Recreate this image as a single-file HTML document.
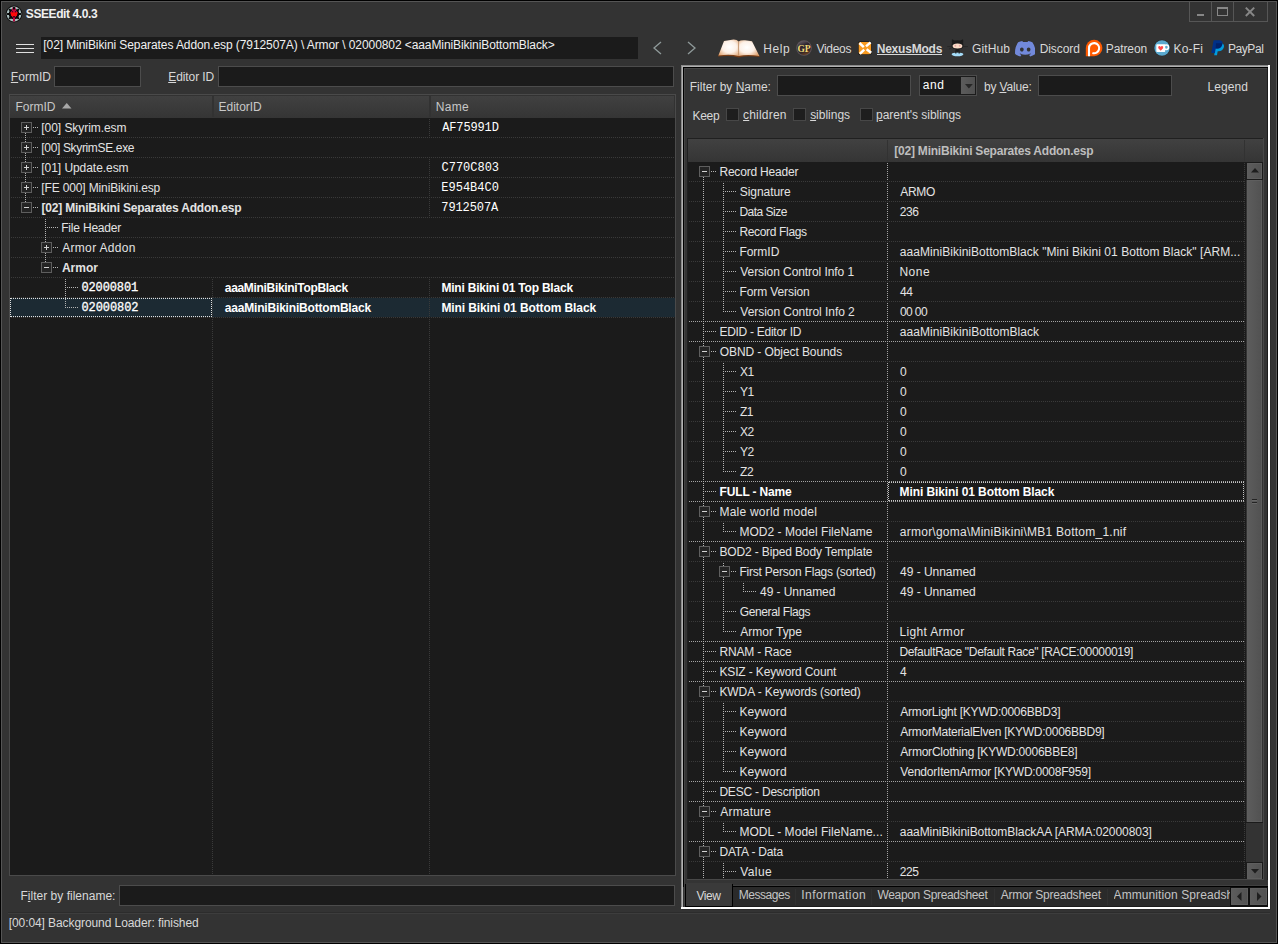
<!DOCTYPE html>
<html><head><meta charset="utf-8"><title>SSEEdit 4.0.3</title><style>
html,body{margin:0;padding:0;background:#333;}
body{width:1278px;height:944px;position:relative;overflow:hidden;font-family:"Liberation Sans",sans-serif;}
#w{position:absolute;left:0;top:0;width:1278px;height:944px;overflow:hidden}
#w div,#w svg,#w span.t{position:absolute}
.t{white-space:pre;line-height:20px;height:20px}
.m{font-family:"Liberation Mono",monospace}
.hd{height:1px;background-image:linear-gradient(90deg,var(--c) 50%,transparent 50%);background-size:2px 1px}
.vd{width:1px;background-image:linear-gradient(180deg,var(--c) 50%,transparent 50%);background-size:1px 2px}
.bx{width:11px;height:11px;box-sizing:border-box;border:1px solid #5e5e5e;background:#242424}
.bx i{position:absolute;background:#d2d2d2;display:block}
.focus{box-sizing:border-box;border:1px dotted #e0e0e0}
u{text-decoration:underline;text-underline-offset:1px}
</style></head><body><div id="w">
<div style="left:0px;top:0px;width:1278px;height:944px;background:#000;"></div>
<div style="left:1px;top:1px;width:1276px;height:942px;background:#555555;"></div>
<div style="left:2px;top:2px;width:1274px;height:940px;background:#333333;"></div>
<div style="left:1189px;top:1px;width:79px;height:21px;border:1px solid #565656;box-sizing:border-box"></div>
<div style="left:1211px;top:2px;width:1px;height:19px;background:#565656;"></div>
<div style="left:1233px;top:2px;width:1px;height:19px;background:#565656;"></div>
<div style="left:1197px;top:14px;width:7px;height:2px;background:#878787;"></div>
<div style="left:1217px;top:7px;width:11px;height:9px;border:1px solid #878787;border-top-width:2px;box-sizing:border-box"></div>
<svg style="left:1244px;top:6px" width="12" height="12" viewBox="0 0 12 12"><path d="M1.8 1.6 L10.2 10 M10.2 1.6 L1.8 10" stroke="#878787" stroke-width="2" fill="none"/></svg>
<div style="left:16px;top:44px;width:18px;height:1px;background:#e0e0e0;"></div>
<div style="left:16px;top:48px;width:18px;height:1px;background:#e0e0e0;"></div>
<div style="left:16px;top:52px;width:18px;height:1px;background:#e0e0e0;"></div>
<div style="left:41px;top:37px;width:597px;height:22px;background:#1b1b1b;"></div>
<svg style="left:652px;top:41px" width="11" height="14" viewBox="0 0 11 14"><path d="M9 1 L2 7 L9 13" stroke="#8f9a9a" stroke-width="1.3" fill="none"/></svg>
<svg style="left:686px;top:41px" width="11" height="14" viewBox="0 0 11 14"><path d="M2 1 L9 7 L2 13" stroke="#8f9a9a" stroke-width="1.3" fill="none"/></svg>
<div style="left:877px;top:54px;width:65px;height:1px;background:#d8d8d8;"></div>
<svg style="left:716px;top:38px" width="46" height="20" viewBox="716 38 46 20">
<defs>
<radialGradient id="pgL" cx="0.55" cy="0.45" r="0.7"><stop offset="0" stop-color="#ffffff"/><stop offset="0.5" stop-color="#fdf1e8"/><stop offset="1" stop-color="#dfa06c"/></radialGradient>
<radialGradient id="pgR" cx="0.4" cy="0.45" r="0.7"><stop offset="0" stop-color="#ffffff"/><stop offset="0.5" stop-color="#fdf1e8"/><stop offset="1" stop-color="#dfa06c"/></radialGradient>
</defs>
<path d="M718 56.6 Q730 55 738.6 57.4 Q748 55.2 759.8 57 L758.8 55 L718.8 54.6 Z" fill="#7a3e16"/>
<path d="M724 41 Q729 40.2 733.5 39.5 Q737 39.4 738.6 41.6 L738.6 56 Q730 53.6 718.4 55.6 Z" fill="url(#pgL)"/>
<path d="M738.6 41.6 Q740.5 40 745 40.3 L752 41.2 L759.4 56.1 Q748 53.8 738.6 56 Z" fill="url(#pgR)"/>
<path d="M738.6 41.8 L738.6 56" stroke="#c9956a" stroke-width="0.8" fill="none"/>
</svg>
<svg style="left:796px;top:40px" width="16" height="16" viewBox="0 0 16 16">
<defs><linearGradient id="gpg" x1="0.2" y1="0" x2="0.6" y2="1"><stop offset="0" stop-color="#6a6068"/><stop offset="0.35" stop-color="#2e2630"/><stop offset="0.75" stop-color="#30242a"/><stop offset="1" stop-color="#6a4020"/></linearGradient></defs>
<circle cx="8" cy="8" r="7.8" fill="#5e565c"/><circle cx="8" cy="8" r="6.9" fill="url(#gpg)"/>
<text x="8" y="11.9" text-anchor="middle" font-family="Liberation Serif" font-weight="bold" font-size="10" fill="#efd977" textLength="13.2" lengthAdjust="spacingAndGlyphs">GP</text>
</svg>
<svg style="left:857px;top:40px" width="16" height="16" viewBox="857 40 16 16">
<rect x="858" y="41.2" width="13.8" height="13.8" rx="2.2" fill="#1c1c1c"/>
<rect x="858.7" y="41.9" width="12.4" height="12.4" rx="1.8" fill="#f89a20"/>
<path d="M859.4 43 L863.8 47.2 M870.6 42.4 L866 46.4 M859.8 53.8 L864.2 49.6 M871.2 52.8 L866.6 49.2" stroke="#ffffff" stroke-width="2.5" fill="none"/>
</svg>
<svg style="left:945px;top:38px" width="24" height="20" viewBox="945 38 24 20">
<ellipse cx="957.5" cy="54.3" rx="5.9" ry="1.9" fill="#a4dcf8"/>
<path d="M947.2 46.6 L951.8 46.5 M963.2 46.5 L968 46.6 M949 49 L952 47.8" stroke="#232323" stroke-width="0.7" fill="none"/>
<path d="M952 39.2 L954.6 40.6 Q957.5 40 960.4 40.6 L963 39.2 Q963.6 41.5 963.1 43 Q964 45.5 963 47.4 Q961.5 49 959.5 49 L959.8 53.4 L958.6 53.6 L958.3 50.6 L957.5 53 L956.7 50.6 L956.4 53.6 L955.2 53.4 L955.5 49 Q953.5 49 952 47.4 Q951 45.5 951.9 43 Q951.4 41.5 952 39.2 Z" fill="#1b1b1b"/>
<ellipse cx="957.5" cy="45.9" rx="4.9" ry="2.5" fill="#fbdcc6"/>
<ellipse cx="955.4" cy="45.7" rx="0.9" ry="1" fill="#e8a8a8"/><ellipse cx="959.7" cy="45.7" rx="0.9" ry="1" fill="#e8a8a8"/>
</svg>
<svg style="left:1014.7px;top:41.2px" width="20.5" height="15.5" viewBox="0 0 127.14 96.36">
<path fill="#7289da" d="M107.7,8.07A105.15,105.15,0,0,0,81.47,0a72.06,72.06,0,0,0-3.36,6.83A97.68,97.68,0,0,0,49,6.83,72.37,72.37,0,0,0,45.64,0,105.89,105.89,0,0,0,19.39,8.09C2.79,32.65-1.71,56.6.54,80.21h0A105.73,105.73,0,0,0,32.71,96.36,77.7,77.7,0,0,0,39.6,85.25a68.42,68.42,0,0,1-10.85-5.18c.91-.66,1.8-1.34,2.66-2a75.57,75.57,0,0,0,64.32,0c.87.71,1.76,1.39,2.66,2a68.68,68.68,0,0,1-10.87,5.19,77,77,0,0,0,6.89,11.1A105.25,105.25,0,0,0,126.6,80.22h0C129.24,52.84,122.09,29.11,107.7,8.07ZM42.45,65.69C36.18,65.69,31,60,31,53s5-12.74,11.43-12.74S54,46,53.89,53,48.84,65.69,42.45,65.69Zm42.24,0C78.41,65.69,73.25,60,73.25,53s5-12.74,11.44-12.74S96.23,46,96.12,53,91.08,65.69,84.69,65.69Z"/>
</svg>
<svg style="left:1085px;top:39px" width="18" height="18" viewBox="1085 39 18 18">
<path d="M1085.8 56.2 L1085.8 48 A8.3 8.3 0 1 1 1094.1 56.3 Z" fill="#ff5a00"/>
<path d="M1089 56.2 L1089 48.2 A5.1 5.1 0 1 1 1092.4 53" stroke="#ffffff" stroke-width="2.1" fill="none"/>
</svg>
<svg style="left:1153px;top:39px" width="18" height="18" viewBox="1153 39 18 18">
<circle cx="1162" cy="48" r="8.2" fill="#222222"/>
<circle cx="1162" cy="48" r="7.7" fill="#5aa9cf"/>
<circle cx="1166.3" cy="47.2" r="2.2" stroke="#ffffff" stroke-width="1.5" fill="none"/>
<rect x="1156.3" y="44.3" width="8.9" height="7.7" rx="0.8" fill="#ffffff"/>
<path d="M1160.7 50.7 L1158.3 48.2 Q1157.7 46.4 1159.2 46.1 Q1160.3 46 1160.7 47 Q1161.1 46 1162.2 46.1 Q1163.7 46.4 1163.1 48.2 Z" fill="#ff4a4a"/>
</svg>
<svg style="left:1210px;top:39px" width="16" height="18" viewBox="1210 39 16 18">
<path d="M1216 43 L1221.5 43 Q1224.8 44 1223.8 47.6 Q1222.6 51.2 1218.6 51.2 L1217.7 51.2 L1217 55.3 L1214.2 55.3 Z" fill="#009cde"/>
<path d="M1213.6 40.2 L1219.8 40.2 Q1223.2 40.6 1222.4 44.4 Q1221.4 48.4 1217.4 48.6 L1215.7 48.6 L1214.9 53 L1211.3 53 Z" fill="#003087"/>
<path d="M1216 43.2 L1222.3 43.2 Q1221.8 48.2 1217.4 48.6 L1215.7 48.6 Z" fill="#012169"/>
</svg>
<svg style="left:5px;top:5px" width="18" height="18" viewBox="0 0 18 18">
<circle cx="9" cy="9" r="8.4" fill="#121212"/>
<circle cx="9" cy="9" r="7.4" fill="#a9bebe"/>
<circle cx="9" cy="9" r="5.2" fill="#060606"/>
<path d="M13.90 8.01 L15.94 8.09 L15.94 9.91 L13.90 9.99 L13.17 11.76 L14.55 13.27 L13.27 14.55 L11.76 13.17 L9.99 13.90 L9.91 15.94 L8.09 15.94 L8.01 13.90 L6.24 13.17 L4.73 14.55 L3.45 13.27 L4.83 11.76 L4.10 9.99 L2.06 9.91 L2.06 8.09 L4.10 8.01 L4.83 6.24 L3.45 4.73 L4.73 3.45 L6.24 4.83 L8.01 4.10 L8.09 2.06 L9.91 2.06 L9.99 4.10 L11.76 4.83 L13.27 3.45 L14.55 4.73 L13.17 6.24 Z" fill="#060606"/>
<path d="M7.5 1.4 L8.3 4.8 L9 4.2 L9.7 4.8 L10.5 1.4 L11 5.2 L12.6 7.6 L11.8 10.6 L10.2 12.6 L9.8 16.6 L8.2 16.6 L7.8 12.6 L6.2 10.6 L5.4 7.6 L7 5.2 Z" fill="#c00840"/>
<path d="M5.5 7.2 L12.5 7.2 L11.9 10.4 L10.4 11.6 L7.6 11.6 L6.1 10.4 Z" fill="#ff0808"/>
<path d="M7.2 6 L8.3 7.3 L6.9 7.3 Z M10.8 6 L11.1 7.3 L9.7 7.3 Z M8 11.2 L9 13.2 L10 11.2 Z" fill="#060606"/>
</svg>

<div style="left:54px;top:66px;width:87px;height:21px;background:#1b1b1b;border:1px solid #4c4c4c;box-sizing:border-box"></div>
<div style="left:218px;top:66px;width:456px;height:21px;background:#1b1b1b;border:1px solid #4c4c4c;box-sizing:border-box"></div>
<div style="left:9px;top:94px;width:667px;height:782px;background:#4a4a4a;"></div>
<div style="left:10px;top:95px;width:665px;height:780px;background:#1b1b1b;"></div>
<div style="left:10px;top:95px;width:665px;height:23px;background:linear-gradient(#414141,#353535)"></div>
<div style="left:10px;top:95px;width:665px;height:1px;background:#323232;"></div>
<div style="left:674px;top:96px;width:1px;height:22px;background:#323232;"></div>
<div style="left:212px;top:96px;width:2px;height:21px;background:#323232;"></div>
<div style="left:429px;top:96px;width:2px;height:21px;background:#323232;"></div>
<svg style="left:62px;top:103px" width="10" height="6" viewBox="0 0 10 6"><path d="M0 5.5 L4.75 0 L9.5 5.5 Z" fill="#a8a8a8"/></svg>
<div style="left:10px;top:298px;width:665px;height:19px;background:#1c2a33;"></div>
<div class="hd" style="left:11px;top:137px;width:664px;--c:#3a3a3a"></div>
<div class="hd" style="left:11px;top:157px;width:664px;--c:#3a3a3a"></div>
<div class="hd" style="left:11px;top:177px;width:664px;--c:#3a3a3a"></div>
<div class="hd" style="left:11px;top:197px;width:664px;--c:#3a3a3a"></div>
<div class="hd" style="left:11px;top:217px;width:664px;--c:#3a3a3a"></div>
<div class="hd" style="left:11px;top:237px;width:664px;--c:#3a3a3a"></div>
<div class="hd" style="left:11px;top:257px;width:664px;--c:#3a3a3a"></div>
<div class="hd" style="left:11px;top:277px;width:664px;--c:#3a3a3a"></div>
<div class="hd" style="left:11px;top:297px;width:664px;--c:#3a3a3a"></div>
<div class="hd" style="left:11px;top:317px;width:664px;--c:#3a3a3a"></div>
<div class="vd" style="left:429px;top:119px;height:19px;--c:#3a3a3a"></div>
<div class="vd" style="left:429px;top:159px;height:19px;--c:#3a3a3a"></div>
<div class="vd" style="left:429px;top:179px;height:19px;--c:#3a3a3a"></div>
<div class="vd" style="left:429px;top:199px;height:19px;--c:#3a3a3a"></div>
<div class="vd" style="left:212px;top:279px;height:596px;--c:#3a3a3a"></div>
<div class="vd" style="left:429px;top:279px;height:596px;--c:#3a3a3a"></div>
<div class="focus" style="left:10px;top:298px;width:202px;height:19px"></div>
<div class="bx" style="left:21px;top:122px"><i style="left:2px;top:4px;width:5px;height:1px"></i><i style="left:4px;top:2px;width:1px;height:5px"></i></div>
<div class="hd" style="left:33px;top:127px;width:5px;--c:#b4b4b4"></div>
<div class="bx" style="left:21px;top:142px"><i style="left:2px;top:4px;width:5px;height:1px"></i><i style="left:4px;top:2px;width:1px;height:5px"></i></div>
<div class="hd" style="left:33px;top:147px;width:5px;--c:#b4b4b4"></div>
<div class="bx" style="left:21px;top:162px"><i style="left:2px;top:4px;width:5px;height:1px"></i><i style="left:4px;top:2px;width:1px;height:5px"></i></div>
<div class="hd" style="left:33px;top:167px;width:5px;--c:#b4b4b4"></div>
<div class="bx" style="left:21px;top:182px"><i style="left:2px;top:4px;width:5px;height:1px"></i><i style="left:4px;top:2px;width:1px;height:5px"></i></div>
<div class="hd" style="left:33px;top:187px;width:5px;--c:#b4b4b4"></div>
<div class="bx" style="left:21px;top:202px"><i style="left:2px;top:4px;width:5px;height:1px"></i></div>
<div class="hd" style="left:33px;top:207px;width:5px;--c:#b4b4b4"></div>
<div class="hd" style="left:45px;top:227px;width:13px;--c:#b4b4b4"></div>
<div class="bx" style="left:41px;top:242px"><i style="left:2px;top:4px;width:5px;height:1px"></i><i style="left:4px;top:2px;width:1px;height:5px"></i></div>
<div class="hd" style="left:53px;top:247px;width:5px;--c:#b4b4b4"></div>
<div class="bx" style="left:41px;top:262px"><i style="left:2px;top:4px;width:5px;height:1px"></i></div>
<div class="hd" style="left:53px;top:267px;width:5px;--c:#b4b4b4"></div>
<div class="vd" style="left:25px;top:133px;height:9px;--c:#b4b4b4"></div>
<div class="vd" style="left:25px;top:153px;height:9px;--c:#b4b4b4"></div>
<div class="vd" style="left:25px;top:173px;height:9px;--c:#b4b4b4"></div>
<div class="vd" style="left:25px;top:193px;height:9px;--c:#b4b4b4"></div>
<div class="vd" style="left:45px;top:219px;height:23px;--c:#b4b4b4"></div>
<div class="vd" style="left:45px;top:253px;height:9px;--c:#b4b4b4"></div>
<div class="vd" style="left:65px;top:279px;height:29px;--c:#b4b4b4"></div>
<div class="hd" style="left:65px;top:287px;width:13px;--c:#b4b4b4"></div>
<div class="hd" style="left:65px;top:307px;width:13px;--c:#b4b4b4"></div>
<div style="left:119px;top:885px;width:556px;height:21px;background:#1b1b1b;border:1px solid #4c4c4c;box-sizing:border-box"></div>
<div style="left:8px;top:912px;width:1262px;height:1px;background:#2c2c2c;"></div>
<div style="left:8px;top:913px;width:1262px;height:1px;background:#3d3d3d;"></div>
<div style="left:681px;top:65px;width:589px;height:844px;background:#ffffff;"></div>
<div style="left:681px;top:65px;width:587px;height:842px;background:#8a8a8a;"></div>
<div style="left:682px;top:66px;width:586px;height:841px;background:#b2b2b2;"></div>
<div style="left:683px;top:67px;width:585px;height:840px;background:#000;"></div>
<div style="left:684px;top:68px;width:584px;height:839px;background:#454545;"></div>
<div style="left:685px;top:69px;width:582px;height:837px;background:#343434;"></div>
<div style="left:1267px;top:68px;width:1px;height:839px;background:#1c1c1c;"></div>
<div style="left:1270px;top:66px;width:1px;height:844px;background:#2c2c2c;"></div>
<div style="left:682px;top:909px;width:589px;height:1px;background:#2c2c2c;"></div>
<div style="left:777px;top:75px;width:134px;height:21px;background:#1b1b1b;border:1px solid #4c4c4c;box-sizing:border-box"></div>
<div style="left:919px;top:75px;width:58px;height:21px;background:#1b1b1b;border:1px solid #4c4c4c;box-sizing:border-box"></div>
<div style="left:961px;top:77px;width:14px;height:17px;background:linear-gradient(90deg,#5c5c5c,#505050)"></div>
<svg style="left:964.6px;top:84px" width="8" height="5" viewBox="0 0 8 5"><path d="M0 0 L7.8 0 L3.9 4.6 Z" fill="#262626"/></svg>
<div style="left:1038px;top:75px;width:134px;height:21px;background:#1b1b1b;border:1px solid #4c4c4c;box-sizing:border-box"></div>
<div style="left:726px;top:108px;width:13px;height:13px;background:#1e1e1e;border:1px solid #474747;box-sizing:border-box"></div>
<div style="left:793px;top:108px;width:13px;height:13px;background:#1e1e1e;border:1px solid #474747;box-sizing:border-box"></div>
<div style="left:860px;top:108px;width:13px;height:13px;background:#1e1e1e;border:1px solid #474747;box-sizing:border-box"></div>
<div style="left:687px;top:138px;width:577px;height:742px;background:#484848;"></div>
<div style="left:687px;top:138px;width:576px;height:741px;background:#202020;"></div>
<div style="left:688px;top:139px;width:575px;height:740px;background:#1b1b1b;"></div>
<div style="left:688px;top:139px;width:575px;height:23px;background:linear-gradient(#414141,#353535)"></div>
<div style="left:887px;top:140px;width:1px;height:21px;background:#323232;"></div>
<div style="left:1244px;top:140px;width:1px;height:21px;background:#323232;"></div>
<div class="vd" style="left:887px;top:163px;height:716px;--c:#a4a4a4"></div>
<div class="vd" style="left:1244px;top:163px;height:716px;--c:#3a3a3a"></div>
<div class="hd" style="left:689px;top:181px;width:556px;--c:#3a3a3a"></div>
<div class="hd" style="left:689px;top:201px;width:556px;--c:#3a3a3a"></div>
<div class="hd" style="left:689px;top:221px;width:556px;--c:#3a3a3a"></div>
<div class="hd" style="left:689px;top:241px;width:556px;--c:#3a3a3a"></div>
<div class="hd" style="left:689px;top:261px;width:556px;--c:#3a3a3a"></div>
<div class="hd" style="left:689px;top:281px;width:556px;--c:#3a3a3a"></div>
<div class="hd" style="left:689px;top:301px;width:556px;--c:#3a3a3a"></div>
<div class="hd" style="left:689px;top:321px;width:556px;--c:#a4a4a4"></div>
<div class="hd" style="left:689px;top:341px;width:556px;--c:#a4a4a4"></div>
<div class="hd" style="left:689px;top:361px;width:556px;--c:#3a3a3a"></div>
<div class="hd" style="left:689px;top:381px;width:556px;--c:#3a3a3a"></div>
<div class="hd" style="left:689px;top:401px;width:556px;--c:#3a3a3a"></div>
<div class="hd" style="left:689px;top:421px;width:556px;--c:#3a3a3a"></div>
<div class="hd" style="left:689px;top:441px;width:556px;--c:#3a3a3a"></div>
<div class="hd" style="left:689px;top:461px;width:556px;--c:#3a3a3a"></div>
<div class="hd" style="left:689px;top:481px;width:556px;--c:#a4a4a4"></div>
<div class="hd" style="left:689px;top:501px;width:556px;--c:#a4a4a4"></div>
<div class="hd" style="left:689px;top:521px;width:556px;--c:#3a3a3a"></div>
<div class="hd" style="left:689px;top:541px;width:556px;--c:#a4a4a4"></div>
<div class="hd" style="left:689px;top:561px;width:556px;--c:#3a3a3a"></div>
<div class="hd" style="left:689px;top:581px;width:556px;--c:#3a3a3a"></div>
<div class="hd" style="left:689px;top:601px;width:556px;--c:#3a3a3a"></div>
<div class="hd" style="left:689px;top:621px;width:556px;--c:#3a3a3a"></div>
<div class="hd" style="left:689px;top:641px;width:556px;--c:#a4a4a4"></div>
<div class="hd" style="left:689px;top:661px;width:556px;--c:#a4a4a4"></div>
<div class="hd" style="left:689px;top:681px;width:556px;--c:#a4a4a4"></div>
<div class="hd" style="left:689px;top:701px;width:556px;--c:#3a3a3a"></div>
<div class="hd" style="left:689px;top:721px;width:556px;--c:#3a3a3a"></div>
<div class="hd" style="left:689px;top:741px;width:556px;--c:#3a3a3a"></div>
<div class="hd" style="left:689px;top:761px;width:556px;--c:#3a3a3a"></div>
<div class="hd" style="left:689px;top:781px;width:556px;--c:#a4a4a4"></div>
<div class="hd" style="left:689px;top:801px;width:556px;--c:#a4a4a4"></div>
<div class="hd" style="left:689px;top:821px;width:556px;--c:#3a3a3a"></div>
<div class="hd" style="left:689px;top:841px;width:556px;--c:#a4a4a4"></div>
<div class="hd" style="left:689px;top:861px;width:556px;--c:#3a3a3a"></div>
<div class="vd" style="left:703px;top:177px;height:169px;--c:#b4b4b4"></div>
<div class="vd" style="left:703px;top:357px;height:149px;--c:#b4b4b4"></div>
<div class="vd" style="left:703px;top:517px;height:29px;--c:#b4b4b4"></div>
<div class="vd" style="left:703px;top:557px;height:129px;--c:#b4b4b4"></div>
<div class="vd" style="left:703px;top:697px;height:109px;--c:#b4b4b4"></div>
<div class="vd" style="left:703px;top:817px;height:29px;--c:#b4b4b4"></div>
<div class="vd" style="left:703px;top:857px;height:22px;--c:#b4b4b4"></div>
<div class="vd" style="left:723px;top:183px;height:129px;--c:#b4b4b4"></div>
<div class="vd" style="left:723px;top:363px;height:109px;--c:#b4b4b4"></div>
<div class="vd" style="left:723px;top:523px;height:9px;--c:#b4b4b4"></div>
<div class="vd" style="left:723px;top:563px;height:3px;--c:#b4b4b4"></div>
<div class="vd" style="left:723px;top:577px;height:55px;--c:#b4b4b4"></div>
<div class="vd" style="left:723px;top:703px;height:69px;--c:#b4b4b4"></div>
<div class="vd" style="left:723px;top:823px;height:9px;--c:#b4b4b4"></div>
<div class="vd" style="left:723px;top:863px;height:16px;--c:#b4b4b4"></div>
<div class="vd" style="left:743px;top:583px;height:9px;--c:#b4b4b4"></div>
<div class="bx" style="left:699px;top:166px"><i style="left:2px;top:4px;width:5px;height:1px"></i></div>
<div class="hd" style="left:711px;top:171px;width:5px;--c:#b4b4b4"></div>
<div class="hd" style="left:723px;top:191px;width:13px;--c:#b4b4b4"></div>
<div class="hd" style="left:723px;top:211px;width:13px;--c:#b4b4b4"></div>
<div class="hd" style="left:723px;top:231px;width:13px;--c:#b4b4b4"></div>
<div class="hd" style="left:723px;top:251px;width:13px;--c:#b4b4b4"></div>
<div class="hd" style="left:723px;top:271px;width:13px;--c:#b4b4b4"></div>
<div class="hd" style="left:723px;top:291px;width:13px;--c:#b4b4b4"></div>
<div class="hd" style="left:723px;top:311px;width:13px;--c:#b4b4b4"></div>
<div class="hd" style="left:703px;top:331px;width:13px;--c:#b4b4b4"></div>
<div class="bx" style="left:699px;top:346px"><i style="left:2px;top:4px;width:5px;height:1px"></i></div>
<div class="hd" style="left:711px;top:351px;width:5px;--c:#b4b4b4"></div>
<div class="hd" style="left:723px;top:371px;width:13px;--c:#b4b4b4"></div>
<div class="hd" style="left:723px;top:391px;width:13px;--c:#b4b4b4"></div>
<div class="hd" style="left:723px;top:411px;width:13px;--c:#b4b4b4"></div>
<div class="hd" style="left:723px;top:431px;width:13px;--c:#b4b4b4"></div>
<div class="hd" style="left:723px;top:451px;width:13px;--c:#b4b4b4"></div>
<div class="hd" style="left:723px;top:471px;width:13px;--c:#b4b4b4"></div>
<div class="hd" style="left:703px;top:491px;width:13px;--c:#b4b4b4"></div>
<div class="bx" style="left:699px;top:506px"><i style="left:2px;top:4px;width:5px;height:1px"></i></div>
<div class="hd" style="left:711px;top:511px;width:5px;--c:#b4b4b4"></div>
<div class="hd" style="left:723px;top:531px;width:13px;--c:#b4b4b4"></div>
<div class="bx" style="left:699px;top:546px"><i style="left:2px;top:4px;width:5px;height:1px"></i></div>
<div class="hd" style="left:711px;top:551px;width:5px;--c:#b4b4b4"></div>
<div class="bx" style="left:719px;top:566px"><i style="left:2px;top:4px;width:5px;height:1px"></i></div>
<div class="hd" style="left:731px;top:571px;width:5px;--c:#b4b4b4"></div>
<div class="hd" style="left:743px;top:591px;width:13px;--c:#b4b4b4"></div>
<div class="hd" style="left:723px;top:611px;width:13px;--c:#b4b4b4"></div>
<div class="hd" style="left:723px;top:631px;width:13px;--c:#b4b4b4"></div>
<div class="hd" style="left:703px;top:651px;width:13px;--c:#b4b4b4"></div>
<div class="hd" style="left:703px;top:671px;width:13px;--c:#b4b4b4"></div>
<div class="bx" style="left:699px;top:686px"><i style="left:2px;top:4px;width:5px;height:1px"></i></div>
<div class="hd" style="left:711px;top:691px;width:5px;--c:#b4b4b4"></div>
<div class="hd" style="left:723px;top:711px;width:13px;--c:#b4b4b4"></div>
<div class="hd" style="left:723px;top:731px;width:13px;--c:#b4b4b4"></div>
<div class="hd" style="left:723px;top:751px;width:13px;--c:#b4b4b4"></div>
<div class="hd" style="left:723px;top:771px;width:13px;--c:#b4b4b4"></div>
<div class="hd" style="left:703px;top:791px;width:13px;--c:#b4b4b4"></div>
<div class="bx" style="left:699px;top:806px"><i style="left:2px;top:4px;width:5px;height:1px"></i></div>
<div class="hd" style="left:711px;top:811px;width:5px;--c:#b4b4b4"></div>
<div class="hd" style="left:723px;top:831px;width:13px;--c:#b4b4b4"></div>
<div class="bx" style="left:699px;top:846px"><i style="left:2px;top:4px;width:5px;height:1px"></i></div>
<div class="hd" style="left:711px;top:851px;width:5px;--c:#b4b4b4"></div>
<div class="hd" style="left:723px;top:871px;width:13px;--c:#b4b4b4"></div>
<div class="focus" style="left:888px;top:482px;width:356px;height:19px;border-color:#c4c4c4"></div>
<div style="left:1245px;top:162px;width:18px;height:717px;background:#333333;"></div>
<div style="left:1245px;top:162px;width:1px;height:717px;background:#1b1b1b;"></div>
<div style="left:1246px;top:162px;width:17px;height:18px;background:#1b1b1b;"></div>
<div style="left:1246px;top:822px;width:17px;height:1px;background:#1b1b1b;"></div>
<div style="left:1246px;top:862px;width:17px;height:17px;background:#1b1b1b;"></div>
<div style="left:1247px;top:163px;width:15px;height:16px;background:linear-gradient(90deg,#5c5c5c,#525252);border:1px solid #5e5e5e;box-sizing:border-box"></div>
<div style="left:1247px;top:180px;width:15px;height:642px;background:linear-gradient(90deg,#5c5c5c,#525252);border:1px solid #5e5e5e;box-sizing:border-box"></div>
<div style="left:1247px;top:863px;width:15px;height:16px;background:linear-gradient(90deg,#5c5c5c,#525252);border:1px solid #5e5e5e;box-sizing:border-box"></div>
<svg style="left:1250.5px;top:168px" width="8" height="5" viewBox="0 0 8 5"><path d="M0 4.5 L4 0 L8 4.5 Z" fill="#1e1e1e"/></svg>
<svg style="left:1250.5px;top:869px" width="8" height="5" viewBox="0 0 8 5"><path d="M0 0 L8 0 L4 4.5 Z" fill="#1e1e1e"/></svg>
<div style="left:1252px;top:499px;width:5px;height:1px;background:#242424;"></div>
<div style="left:1252px;top:500px;width:5px;height:1px;background:#686868;"></div>
<div style="left:1252px;top:502px;width:5px;height:1px;background:#242424;"></div>
<div style="left:1252px;top:503px;width:5px;height:1px;background:#686868;"></div>
<div style="left:687px;top:879px;width:577px;height:1px;background:#484848;"></div>
<div style="left:685px;top:880px;width:583px;height:6px;background:#343434;"></div>
<div style="left:733px;top:886px;width:535px;height:1px;background:#000;"></div>
<div style="left:685px;top:887px;width:583px;height:19px;background:#2a2a2a;"></div>
<div style="left:685px;top:906px;width:583px;height:1px;background:#1c1c1c;"></div>
<div style="left:685px;top:885px;width:583px;height:1px;background:#404040;"></div>
<div style="left:685px;top:884px;width:48px;height:23px;background:#000;"></div>
<div style="left:686px;top:883px;width:46px;height:23px;background:#3a3a3a;"></div>
<div style="left:683px;top:887px;width:2px;height:20px;background:#343434;"></div>
<div style="left:684px;top:884px;width:1px;height:23px;background:#444;"></div>
<div style="left:795px;top:889px;width:1px;height:16px;background:#303030;"></div>
<div style="left:871px;top:889px;width:1px;height:16px;background:#303030;"></div>
<div style="left:994px;top:889px;width:1px;height:16px;background:#303030;"></div>
<div style="left:1107px;top:889px;width:1px;height:16px;background:#303030;"></div>
<div style="left:1230px;top:887px;width:38px;height:20px;background:#101010;"></div>
<div style="left:1231px;top:888px;width:17px;height:17px;background:linear-gradient(90deg,#5c5c5c,#525252);border:1px solid #5e5e5e;box-sizing:border-box"></div>
<div style="left:1250px;top:888px;width:17px;height:17px;background:linear-gradient(90deg,#5c5c5c,#525252);border:1px solid #5e5e5e;box-sizing:border-box"></div>
<svg style="left:1237px;top:892px" width="5" height="9" viewBox="0 0 5 9"><path d="M4.5 0 L0 4.5 L4.5 9 Z" fill="#1e1e1e"/></svg>
<svg style="left:1257px;top:892px" width="5" height="9" viewBox="0 0 5 9"><path d="M0 0 L4.5 4.5 L0 9 Z" fill="#1e1e1e"/></svg>
<span class="t" id="t0" style="left:25.84px;top:3.50px;font-size:12px;color:#f0f0f0;font-weight:bold;letter-spacing:-0.411px;">SSEEdit 4.0.3</span>
<span class="t" id="t1" style="left:43.34px;top:35.00px;font-size:12px;color:#f0f0f0;letter-spacing:-0.083px;">[02] MiniBikini Separates Addon.esp (7912507A) \ Armor \ 02000802 &lt;aaaMiniBikiniBottomBlack&gt;</span>
<span class="t" id="t2" style="left:763.21px;top:39.00px;font-size:12px;color:#d8d8d8;letter-spacing:0.583px;">Help</span>
<span class="t" id="t3" style="left:816.45px;top:39.00px;font-size:12px;color:#d8d8d8;letter-spacing:-0.285px;">Videos</span>
<span class="t" id="t4" style="left:876.70px;top:39.00px;font-size:12px;color:#d8d8d8;font-weight:bold;letter-spacing:-0.216px;">NexusMods</span>
<span class="t" id="t5" style="left:972.09px;top:39.00px;font-size:12px;color:#d8d8d8;letter-spacing:0.097px;">GitHub</span>
<span class="t" id="t6" style="left:1039.71px;top:39.00px;font-size:12px;color:#d8d8d8;letter-spacing:-0.083px;">Discord</span>
<span class="t" id="t7" style="left:1105.81px;top:39.00px;font-size:12px;color:#d8d8d8;letter-spacing:-0.112px;">Patreon</span>
<span class="t" id="t8" style="left:1173.61px;top:39.00px;font-size:12px;color:#d8d8d8;letter-spacing:0.141px;">Ko-Fi</span>
<span class="t" id="t9" style="left:1227.91px;top:39.00px;font-size:12px;color:#d8d8d8;letter-spacing:-0.403px;">PayPal</span>
<span class="t" id="t10" style="left:10.81px;top:67.00px;font-size:12px;color:#d8d8d8;letter-spacing:0.040px;"><u>F</u>ormID</span>
<span class="t" id="t11" style="left:168.21px;top:67.00px;font-size:12px;color:#d8d8d8;letter-spacing:-0.086px;"><u>E</u>ditor ID</span>
<span class="t" id="t12" style="left:15.41px;top:96.50px;font-size:12px;color:#c8c8c8;letter-spacing:0.020px;">FormID</span>
<span class="t" id="t13" style="left:218.61px;top:96.50px;font-size:12px;color:#c8c8c8;letter-spacing:-0.039px;">EditorID</span>
<span class="t" id="t14" style="left:435.71px;top:96.50px;font-size:12px;color:#c8c8c8;letter-spacing:0.312px;">Name</span>
<span class="t" id="t15" style="left:41.34px;top:118.00px;font-size:12px;color:#e3e3e3;letter-spacing:-0.060px;">[00] Skyrim.esm</span>
<span class="t m" id="t16" style="left:442.15px;top:117.90px;font-size:12px;color:#ffffff;letter-spacing:-0.123px;">AF75991D</span>
<span class="t" id="t17" style="left:41.34px;top:138.00px;font-size:12px;color:#e3e3e3;letter-spacing:-0.348px;">[00] SkyrimSE.exe</span>
<span class="t" id="t18" style="left:41.34px;top:158.00px;font-size:12px;color:#e3e3e3;letter-spacing:-0.057px;">[01] Update.esm</span>
<span class="t m" id="t19" style="left:441.52px;top:157.90px;font-size:12px;color:#ffffff;letter-spacing:-0.016px;">C770C803</span>
<span class="t" id="t20" style="left:41.34px;top:178.00px;font-size:12px;color:#e3e3e3;letter-spacing:-0.143px;">[FE 000] MiniBikini.esp</span>
<span class="t m" id="t21" style="left:441.21px;top:177.90px;font-size:12px;color:#ffffff;letter-spacing:0.029px;">E954B4C0</span>
<span class="t" id="t22" style="left:41.52px;top:198.00px;font-size:12px;color:#e3e3e3;font-weight:bold;letter-spacing:-0.202px;">[02] MiniBikini Separates Addon.esp</span>
<span class="t m" id="t23" style="left:441.27px;top:197.90px;font-size:12px;color:#ffffff;letter-spacing:-0.088px;">7912507A</span>
<span class="t" id="t24" style="left:61.21px;top:218.00px;font-size:12px;color:#e3e3e3;letter-spacing:-0.194px;">File Header</span>
<span class="t" id="t25" style="left:62.15px;top:238.00px;font-size:12px;color:#e3e3e3;letter-spacing:0.329px;">Armor Addon</span>
<span class="t" id="t26" style="left:61.90px;top:258.00px;font-size:12px;color:#e3e3e3;font-weight:bold;letter-spacing:0.009px;">Armor</span>
<span class="t m" id="t27" style="left:81.46px;top:277.90px;font-size:12px;color:#ffffff;-webkit-text-stroke:0.3px #ffffff;letter-spacing:-0.125px;">02000801</span>
<span class="t" id="t28" style="left:224.84px;top:278.00px;font-size:12px;color:#ffffff;font-weight:bold;letter-spacing:-0.325px;">aaaMiniBikiniTopBlack</span>
<span class="t" id="t29" style="left:441.40px;top:278.00px;font-size:12px;color:#ffffff;font-weight:bold;letter-spacing:-0.207px;">Mini Bikini 01 Top Black</span>
<span class="t m" id="t30" style="left:81.46px;top:297.90px;font-size:12px;color:#ffffff;-webkit-text-stroke:0.3px #ffffff;letter-spacing:-0.089px;">02000802</span>
<span class="t" id="t31" style="left:224.84px;top:298.00px;font-size:12px;color:#ffffff;font-weight:bold;letter-spacing:-0.190px;">aaaMiniBikiniBottomBlack</span>
<span class="t" id="t32" style="left:441.40px;top:298.00px;font-size:12px;color:#ffffff;font-weight:bold;letter-spacing:-0.101px;">Mini Bikini 01 Bottom Black</span>
<span class="t" id="t33" style="left:20.51px;top:886.00px;font-size:12px;color:#d8d8d8;letter-spacing:0.012px;">F<u>i</u>lter by filename:</span>
<span class="t" id="t34" style="left:8.74px;top:913.00px;font-size:12px;color:#d8d8d8;letter-spacing:-0.084px;">[00:04] Background Loader: finished</span>
<span class="t" id="t35" style="left:689.81px;top:77.00px;font-size:12px;color:#d8d8d8;letter-spacing:-0.015px;">Filter by <u>N</u>ame:</span>
<span class="t" id="t36" style="left:922.65px;top:75.00px;font-size:12px;color:#ffffff;letter-spacing:0.594px;">and</span>
<span class="t" id="t37" style="left:983.90px;top:77.00px;font-size:12px;color:#d8d8d8;letter-spacing:-0.152px;">by <u>V</u>alue:</span>
<span class="t" id="t38" style="left:1207.51px;top:77.00px;font-size:12px;color:#d8d8d8;letter-spacing:0.065px;">Legend</span>
<span class="t" id="t39" style="left:692.51px;top:105.60px;font-size:12px;color:#d8d8d8;letter-spacing:-0.308px;">Keep</span>
<span class="t" id="t40" style="left:743.05px;top:105.00px;font-size:12px;color:#d8d8d8;letter-spacing:0.198px;"><u>c</u>hildren</span>
<span class="t" id="t41" style="left:810.14px;top:105.00px;font-size:12px;color:#d8d8d8;letter-spacing:-0.016px;"><u>s</u>iblings</span>
<span class="t" id="t42" style="left:876.10px;top:105.00px;font-size:12px;color:#d8d8d8;letter-spacing:-0.048px;"><u>p</u>arent&#x27;s siblings</span>
<span class="t" id="t43" style="left:894.32px;top:141.00px;font-size:12px;color:#bebebe;font-weight:bold;letter-spacing:-0.226px;">[02] MiniBikini Separates Addon.esp</span>
<span class="t" id="t44" style="left:719.41px;top:162.00px;font-size:12px;color:#e3e3e3;letter-spacing:-0.188px;">Record Header</span>
<span class="t" id="t45" style="left:739.85px;top:182.00px;font-size:12px;color:#e3e3e3;letter-spacing:-0.072px;">Signature</span>
<span class="t" id="t46" style="left:900.35px;top:182.00px;font-size:12px;color:#e3e3e3;letter-spacing:-0.333px;">ARMO</span>
<span class="t" id="t47" style="left:739.41px;top:202.00px;font-size:12px;color:#e3e3e3;letter-spacing:-0.503px;">Data Size</span>
<span class="t" id="t48" style="left:899.79px;top:202.00px;font-size:12px;color:#e3e3e3;letter-spacing:-0.500px;">236</span>
<span class="t" id="t49" style="left:739.41px;top:222.00px;font-size:12px;color:#e3e3e3;letter-spacing:-0.333px;">Record Flags</span>
<span class="t" id="t50" style="left:739.41px;top:242.00px;font-size:12px;color:#e3e3e3;letter-spacing:-0.020px;">FormID</span>
<span class="t" id="t51" style="left:899.85px;top:242.00px;font-size:12px;color:#e3e3e3;letter-spacing:0.040px;">aaaMiniBikiniBottomBlack &quot;Mini Bikini 01 Bottom Black&quot; [ARM...</span>
<span class="t" id="t52" style="left:740.35px;top:262.00px;font-size:12px;color:#e3e3e3;letter-spacing:-0.080px;">Version Control Info 1</span>
<span class="t" id="t53" style="left:899.41px;top:262.00px;font-size:12px;color:#e3e3e3;letter-spacing:0.550px;">None</span>
<span class="t" id="t54" style="left:739.41px;top:282.00px;font-size:12px;color:#e3e3e3;letter-spacing:-0.090px;">Form Version</span>
<span class="t" id="t55" style="left:900.10px;top:282.00px;font-size:12px;color:#e3e3e3;letter-spacing:-0.600px;">44</span>
<span class="t" id="t56" style="left:740.35px;top:302.00px;font-size:12px;color:#e3e3e3;letter-spacing:-0.046px;">Version Control Info 2</span>
<span class="t" id="t57" style="left:899.91px;top:302.00px;font-size:12px;color:#e3e3e3;letter-spacing:-0.572px;">00 00</span>
<span class="t" id="t58" style="left:719.41px;top:322.00px;font-size:12px;color:#e3e3e3;letter-spacing:-0.271px;">EDID - Editor ID</span>
<span class="t" id="t59" style="left:899.85px;top:322.00px;font-size:12px;color:#e3e3e3;letter-spacing:0.047px;">aaaMiniBikiniBottomBlack</span>
<span class="t" id="t60" style="left:719.79px;top:342.00px;font-size:12px;color:#e3e3e3;letter-spacing:-0.086px;">OBND - Object Bounds</span>
<span class="t" id="t61" style="left:740.10px;top:362.00px;font-size:12px;color:#e3e3e3;letter-spacing:-0.600px;">X1</span>
<span class="t" id="t62" style="left:899.91px;top:362.00px;font-size:12px;color:#e3e3e3;letter-spacing:0.188px;">0</span>
<span class="t" id="t63" style="left:740.10px;top:382.00px;font-size:12px;color:#e3e3e3;letter-spacing:-0.600px;">Y1</span>
<span class="t" id="t64" style="left:899.91px;top:382.00px;font-size:12px;color:#e3e3e3;letter-spacing:0.188px;">0</span>
<span class="t" id="t65" style="left:739.98px;top:402.00px;font-size:12px;color:#e3e3e3;letter-spacing:-0.600px;">Z1</span>
<span class="t" id="t66" style="left:899.91px;top:402.00px;font-size:12px;color:#e3e3e3;letter-spacing:0.188px;">0</span>
<span class="t" id="t67" style="left:740.10px;top:422.00px;font-size:12px;color:#e3e3e3;letter-spacing:-0.600px;">X2</span>
<span class="t" id="t68" style="left:899.91px;top:422.00px;font-size:12px;color:#e3e3e3;letter-spacing:0.188px;">0</span>
<span class="t" id="t69" style="left:740.10px;top:442.00px;font-size:12px;color:#e3e3e3;letter-spacing:-0.600px;">Y2</span>
<span class="t" id="t70" style="left:899.91px;top:442.00px;font-size:12px;color:#e3e3e3;letter-spacing:0.188px;">0</span>
<span class="t" id="t71" style="left:739.98px;top:462.00px;font-size:12px;color:#e3e3e3;letter-spacing:-0.263px;">Z2</span>
<span class="t" id="t72" style="left:899.91px;top:462.00px;font-size:12px;color:#e3e3e3;letter-spacing:0.188px;">0</span>
<span class="t" id="t73" style="left:719.60px;top:482.00px;font-size:12px;color:#ffffff;font-weight:bold;letter-spacing:-0.179px;">FULL - Name</span>
<span class="t" id="t74" style="left:899.60px;top:482.00px;font-size:12px;color:#ffffff;font-weight:bold;letter-spacing:-0.101px;">Mini Bikini 01 Bottom Black</span>
<span class="t" id="t75" style="left:719.41px;top:502.00px;font-size:12px;color:#e3e3e3;letter-spacing:0.232px;">Male world model</span>
<span class="t" id="t76" style="left:739.41px;top:522.00px;font-size:12px;color:#e3e3e3;letter-spacing:0.022px;">MOD2 - Model FileName</span>
<span class="t" id="t77" style="left:899.85px;top:522.00px;font-size:12px;color:#e3e3e3;letter-spacing:0.237px;">armor\goma\MiniBikini\MB1 Bottom_1.nif</span>
<span class="t" id="t78" style="left:719.41px;top:542.00px;font-size:12px;color:#e3e3e3;letter-spacing:-0.137px;">BOD2 - Biped Body Template</span>
<span class="t" id="t79" style="left:739.41px;top:562.00px;font-size:12px;color:#e3e3e3;letter-spacing:-0.217px;">First Person Flags (sorted)</span>
<span class="t" id="t80" style="left:900.10px;top:562.00px;font-size:12px;color:#e3e3e3;letter-spacing:-0.033px;">49 - Unnamed</span>
<span class="t" id="t81" style="left:760.10px;top:582.00px;font-size:12px;color:#e3e3e3;letter-spacing:-0.069px;">49 - Unnamed</span>
<span class="t" id="t82" style="left:900.10px;top:582.00px;font-size:12px;color:#e3e3e3;letter-spacing:-0.033px;">49 - Unnamed</span>
<span class="t" id="t83" style="left:739.79px;top:602.00px;font-size:12px;color:#e3e3e3;letter-spacing:-0.378px;">General Flags</span>
<span class="t" id="t84" style="left:740.35px;top:622.00px;font-size:12px;color:#e3e3e3;letter-spacing:-0.024px;">Armor Type</span>
<span class="t" id="t85" style="left:899.41px;top:622.00px;font-size:12px;color:#e3e3e3;letter-spacing:0.345px;">Light Armor</span>
<span class="t" id="t86" style="left:719.41px;top:642.00px;font-size:12px;color:#e3e3e3;letter-spacing:-0.166px;">RNAM - Race</span>
<span class="t" id="t87" style="left:899.41px;top:642.00px;font-size:12px;color:#e3e3e3;letter-spacing:-0.326px;">DefaultRace &quot;Default Race&quot; [RACE:00000019]</span>
<span class="t" id="t88" style="left:719.41px;top:662.00px;font-size:12px;color:#e3e3e3;letter-spacing:-0.130px;">KSIZ - Keyword Count</span>
<span class="t" id="t89" style="left:900.10px;top:662.00px;font-size:12px;color:#e3e3e3;letter-spacing:-0.125px;">4</span>
<span class="t" id="t90" style="left:719.41px;top:682.00px;font-size:12px;color:#e3e3e3;letter-spacing:-0.085px;">KWDA - Keywords (sorted)</span>
<span class="t" id="t91" style="left:739.41px;top:702.00px;font-size:12px;color:#e3e3e3;letter-spacing:0.083px;">Keyword</span>
<span class="t" id="t92" style="left:900.35px;top:702.00px;font-size:12px;color:#e3e3e3;letter-spacing:-0.238px;">ArmorLight [KYWD:0006BBD3]</span>
<span class="t" id="t93" style="left:739.41px;top:722.00px;font-size:12px;color:#e3e3e3;letter-spacing:0.083px;">Keyword</span>
<span class="t" id="t94" style="left:900.35px;top:722.00px;font-size:12px;color:#e3e3e3;letter-spacing:-0.256px;">ArmorMaterialElven [KYWD:0006BBD9]</span>
<span class="t" id="t95" style="left:739.41px;top:742.00px;font-size:12px;color:#e3e3e3;letter-spacing:0.083px;">Keyword</span>
<span class="t" id="t96" style="left:900.35px;top:742.00px;font-size:12px;color:#e3e3e3;letter-spacing:-0.224px;">ArmorClothing [KYWD:0006BBE8]</span>
<span class="t" id="t97" style="left:739.41px;top:762.00px;font-size:12px;color:#e3e3e3;letter-spacing:0.083px;">Keyword</span>
<span class="t" id="t98" style="left:900.35px;top:762.00px;font-size:12px;color:#e3e3e3;letter-spacing:-0.225px;">VendorItemArmor [KYWD:0008F959]</span>
<span class="t" id="t99" style="left:719.41px;top:782.00px;font-size:12px;color:#e3e3e3;letter-spacing:-0.210px;">DESC - Description</span>
<span class="t" id="t100" style="left:720.35px;top:802.00px;font-size:12px;color:#e3e3e3;letter-spacing:0.161px;">Armature</span>
<span class="t" id="t101" style="left:739.41px;top:822.00px;font-size:12px;color:#e3e3e3;letter-spacing:0.046px;">MODL - Model FileName...</span>
<span class="t" id="t102" style="left:899.85px;top:822.00px;font-size:12px;color:#e3e3e3;letter-spacing:-0.069px;">aaaMiniBikiniBottomBlackAA [ARMA:02000803]</span>
<span class="t" id="t103" style="left:719.41px;top:842.00px;font-size:12px;color:#e3e3e3;letter-spacing:-0.183px;">DATA - Data</span>
<span class="t" id="t104" style="left:740.35px;top:862.00px;font-size:12px;color:#e3e3e3;letter-spacing:0.372px;">Value</span>
<span class="t" id="t105" style="left:899.79px;top:862.00px;font-size:12px;color:#e3e3e3;letter-spacing:-0.500px;">225</span>
<span class="t" id="t106" style="left:696.45px;top:886.00px;font-size:12px;color:#d8d8d8;letter-spacing:-0.458px;">View</span>
<span class="t" id="t107" style="left:738.81px;top:885.00px;font-size:12px;color:#c4c4c4;letter-spacing:-0.468px;">Messages</span>
<span class="t" id="t108" style="left:801.29px;top:885.00px;font-size:12px;color:#c4c4c4;letter-spacing:0.435px;">Information</span>
<span class="t" id="t109" style="left:877.45px;top:885.00px;font-size:12px;color:#c4c4c4;letter-spacing:-0.326px;">Weapon Spreadsheet</span>
<span class="t" id="t110" style="left:1000.65px;top:885.00px;font-size:12px;color:#c4c4c4;letter-spacing:-0.227px;">Armor Spreadsheet</span>
<span class="t" id="t111" style="left:1113.55px;top:885.00px;font-size:12px;color:#c4c4c4;letter-spacing:0.091px;width:116.45px;overflow:hidden;">Ammunition Spreadsheet</span>
</div></body></html>
